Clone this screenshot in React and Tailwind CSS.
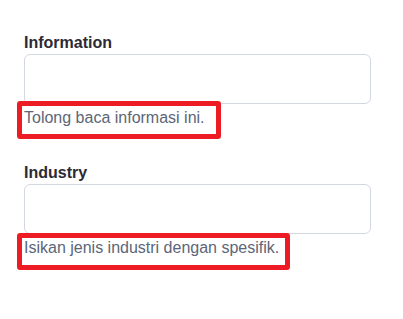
export default function App() {
  return (
    <div className="w-[403px] h-[319px] bg-white px-6 pt-[33px] font-['Liberation_Sans',Arial,sans-serif]">
      <div className="flex flex-col">
        <label className="text-base leading-5 font-bold text-[#2b2a35]">Information</label>
        <div className="mt-px h-[50px] w-[347px] rounded-md border border-[#d3d8e0] bg-white"></div>
        <div className="mt-[2px]">
          <span className="relative inline-block text-base leading-6 text-[#5c6678]">
            Tolong baca informasi ini.
            <span className="pointer-events-none absolute -top-[5px] -bottom-[9px] -left-[7px] -right-[16px] rounded-[3px] border-[5px] border-[#ed1c24]"></span>
          </span>
        </div>
      </div>

      <div className="mt-[33px] flex flex-col">
        <label className="text-base leading-5 font-bold text-[#2b2a35]">Industry</label>
        <div className="mt-px h-[50px] w-[347px] rounded-md border border-[#d3d8e0] bg-white"></div>
        <div className="mt-[2px]">
          <span className="relative inline-block text-base leading-6 text-[#5c6678]">
            Isikan jenis industri dengan spesifik.
            <span className="pointer-events-none absolute -top-[3px] -bottom-[10px] -left-[7px] -right-[11px] rounded-[3px] border-[5px] border-[#ed1c24]"></span>
          </span>
        </div>
      </div>
    </div>
  );
}
